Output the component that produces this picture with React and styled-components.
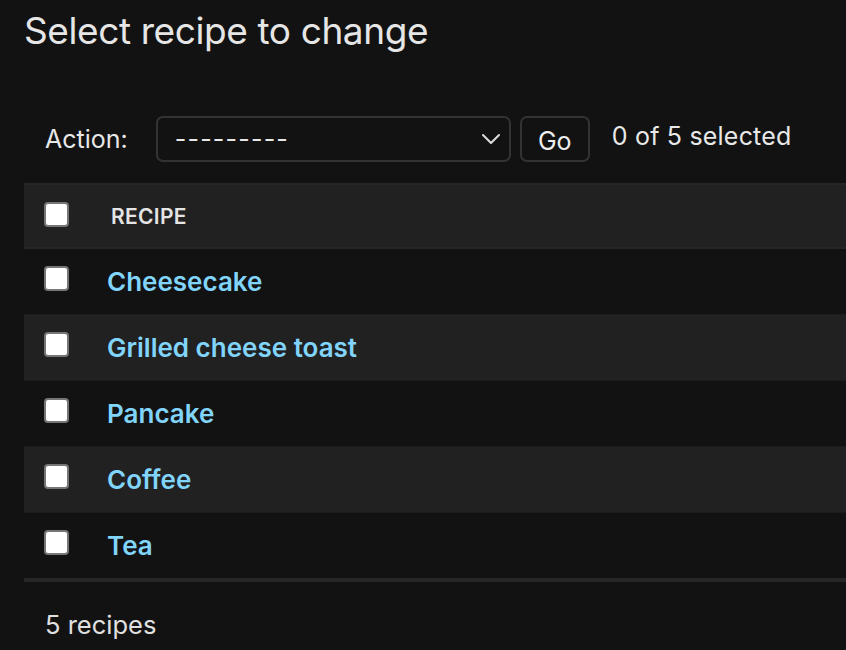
import React from 'react'
import styled, { createGlobalStyle } from 'styled-components'

const GlobalStyle = createGlobalStyle`
  html, body {
    margin: 0;
    background: #121212;
  }
  body {
    font-family: Inter, "Noto Sans", "Liberation Sans", sans-serif;
    color: #eeeeee;
  }
`

const recipes = ['Cheesecake', 'Grilled cheese toast', 'Pancake', 'Coffee', 'Tea']

const Page = styled.div`
  padding: 8px 0 0 24px;
`

const Title = styled.h1`
  margin: 0;
  font-size: 37px;
  line-height: 46px;
  font-weight: 400;
  color: #e6e6e6;
  letter-spacing: -0.4px;
`

const Actions = styled.div`
  display: flex;
  align-items: center;
  height: 46px;
  margin-top: 62px;
  padding-left: 21px;
  font-size: 25px;
  color: #e8e8e8;
`

const Label = styled.span`
  margin-right: 28px;
`

const SelectBox = styled.div`
  box-sizing: border-box;
  width: 355px;
  height: 46px;
  display: flex;
  align-items: center;
  justify-content: space-between;
  padding: 0 8px 0 17px;
  border: 2px solid #333333;
  border-radius: 7px;
  background: #121212;
  letter-spacing: 1.2px;
`

const Button = styled.button`
  box-sizing: border-box;
  height: 46px;
  width: 70px;
  margin-left: 9px;
  border: 2px solid #333333;
  border-radius: 7px;
  background: #121212;
  color: #eeeeee;
  font: inherit;
  padding: 4px 0 0;
`

const Counter = styled.span`
  margin-left: 22px;
  margin-top: -6px;
  letter-spacing: 0.2px;
`

const Table = styled.table`
  width: 100%;
  margin-top: 21px;
  border-collapse: collapse;
`

const HeadCell = styled.th`
  height: 62px;
  padding: 0;
  text-align: left;
  background: #212121;
  border-top: 2px solid #262626;
  border-bottom: 2px solid #262626;
  font-size: 21px;
  font-weight: 600;
  color: #e4e4e4;
  letter-spacing: 0.3px;
  text-transform: uppercase;
`

const Row = styled.tr`
  background: ${(p) => (p.$even ? '#212121' : '#121212')};
`

const Cell = styled.td`
  height: 65px;
  padding: 0;
  border-bottom: 1px solid #1c1c1c;
  ${(p) => p.$last && 'border-bottom: 4px solid #272727;'}
`

const CheckCell = styled(Cell)`
  width: 21px;
  padding-left: 20px;
  padding-right: 38px;
`

const HeadCheck = styled(HeadCell)`
  width: 21px;
  padding-left: 20px;
  padding-right: 38px;
`

const Box = styled.span`
  display: block;
  box-sizing: border-box;
  width: 25px;
  height: 25px;
  margin-top: ${(p) => (p.$head ? '-3px' : '-6px')};
  background: #ffffff;
  border: 2px solid #767676;
  border-radius: 4px;
`

const RecipeLink = styled.a`
  color: #81d4fa;
  font-size: 26px;
  font-weight: 600;
  text-decoration: none;
`

const HeadLabel = styled.span`
  padding-left: 4px;
`

const Footer = styled.p`
  margin: 27px 0 0 21px;
  font-size: 25.5px;
  color: #e0e0e0;
`

const Chevron = () => (
  <svg width="20" height="12" viewBox="0 0 20 12" fill="none">
    <path d="M2 2l8 8 8-8" stroke="#dddddd" strokeWidth="2" strokeLinecap="round" strokeLinejoin="round" />
  </svg>
)

export default function App() {
  return (
    <Page>
      <GlobalStyle />
      <Title>Select recipe to change</Title>
      <Actions>
        <Label>Action:</Label>
        <SelectBox>
          <span>---------</span>
          <Chevron />
        </SelectBox>
        <Button>Go</Button>
        <Counter>0 of 5 selected</Counter>
      </Actions>
      <Table>
        <thead>
          <tr>
            <HeadCheck>
              <Box $head />
            </HeadCheck>
            <HeadCell>
              <HeadLabel>Recipe</HeadLabel>
            </HeadCell>
          </tr>
        </thead>
        <tbody>
          {recipes.map((name, i) => (
            <Row key={name} $even={i % 2 === 1}>
              <CheckCell $last={i === recipes.length - 1}>
                <Box />
              </CheckCell>
              <Cell $last={i === recipes.length - 1}>
                <RecipeLink href="#">{name}</RecipeLink>
              </Cell>
            </Row>
          ))}
        </tbody>
      </Table>
      <Footer>5 recipes</Footer>
    </Page>
  )
}
